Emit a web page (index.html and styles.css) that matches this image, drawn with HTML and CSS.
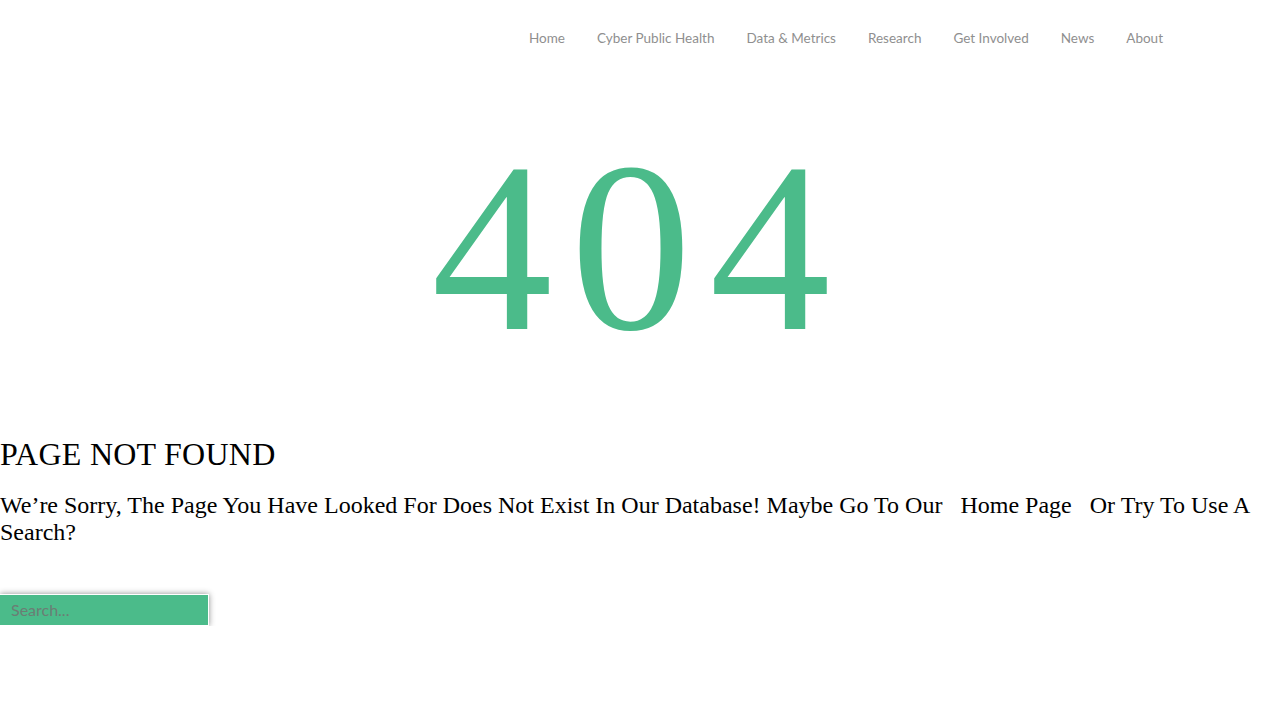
FILE: index.html
```html
<!DOCTYPE html>
<html lang="en">
<head>
<meta charset="utf-8">
<title>404 - Page Not Found</title>
<link rel="stylesheet" href="styles.css">
</head>
<body>
<header class="site-header">
  <nav class="main-nav">
    <a href="#" class="nav-link">Home</a>
    <a href="#" class="nav-link">Cyber Public Health</a>
    <a href="#" class="nav-link">Data &amp; Metrics</a>
    <a href="#" class="nav-link">Research</a>
    <a href="#" class="nav-link">Get Involved</a>
    <a href="#" class="nav-link">News</a>
    <a href="#" class="nav-link">About</a>
  </nav>
</header>
<main class="error-page">
  <div class="error-code">404</div>
  <h2 class="error-title">PAGE NOT FOUND</h2>
  <p class="error-text"><span>We’re Sorry, The Page You Have Looked For Does Not Exist In Our Database! Maybe Go To Our</span> <a href="#" class="home-link">Home Page</a> <span>Or Try To Use A</span> <span>Search?</span></p>
  <form class="search-form">
    <input type="search" class="search-input" placeholder="Search...">
  </form>
</main>
</body>
</html>
```
FILE: styles.css
```css
html, body {
  margin: 0;
  padding: 0;
  background: #fff;
}
body {
  font-family: "Liberation Serif", "Times New Roman", serif;
  color: #000;
}
.site-header {
  display: flex;
  justify-content: flex-end;
  padding: 28px 117px 0 0;
  height: 30px;
}
.main-nav {
  display: flex;
  gap: 32px;
}
.nav-link {
  font-family: Lato, "Noto Sans", sans-serif;
  font-size: 13.5px;
  line-height: 20px;
  color: #8f8f8f;
  text-decoration: none;
}
.error-page {
  display: flex;
  flex-direction: column;
}
.error-code {
  margin-top: 68px;
  text-align: center;
  font-size: 242px;
  letter-spacing: 18px;
  line-height: 1;
  color: #4bbb8a;
}
.error-title {
  margin: 68px 0 0;
  font-size: 32px;
  font-weight: normal;
  letter-spacing: 0.25px;
  line-height: 1.15;
}
.error-text {
  margin: 19px 0 0;
  font-size: 24px;
  line-height: 1.15;
}
.home-link {
  color: #000;
  text-decoration: none;
  margin: 0 12px;
}
.search-form {
  margin-top: 47px;
}
.search-input {
  box-sizing: border-box;
  width: 209px;
  height: 32px;
  margin: 0;
  padding: 0 11px;
  border: 1px solid #fff;
  border-left: 0;
  background: #4bbb8a;
  box-shadow: 0 0 6px rgba(0,0,0,0.45);
  font-family: Lato, "Noto Sans", sans-serif;
  font-size: 16px;
  color: #333;
  outline: none;
}
.search-input::placeholder {
  color: #6b7d74;
}
```
